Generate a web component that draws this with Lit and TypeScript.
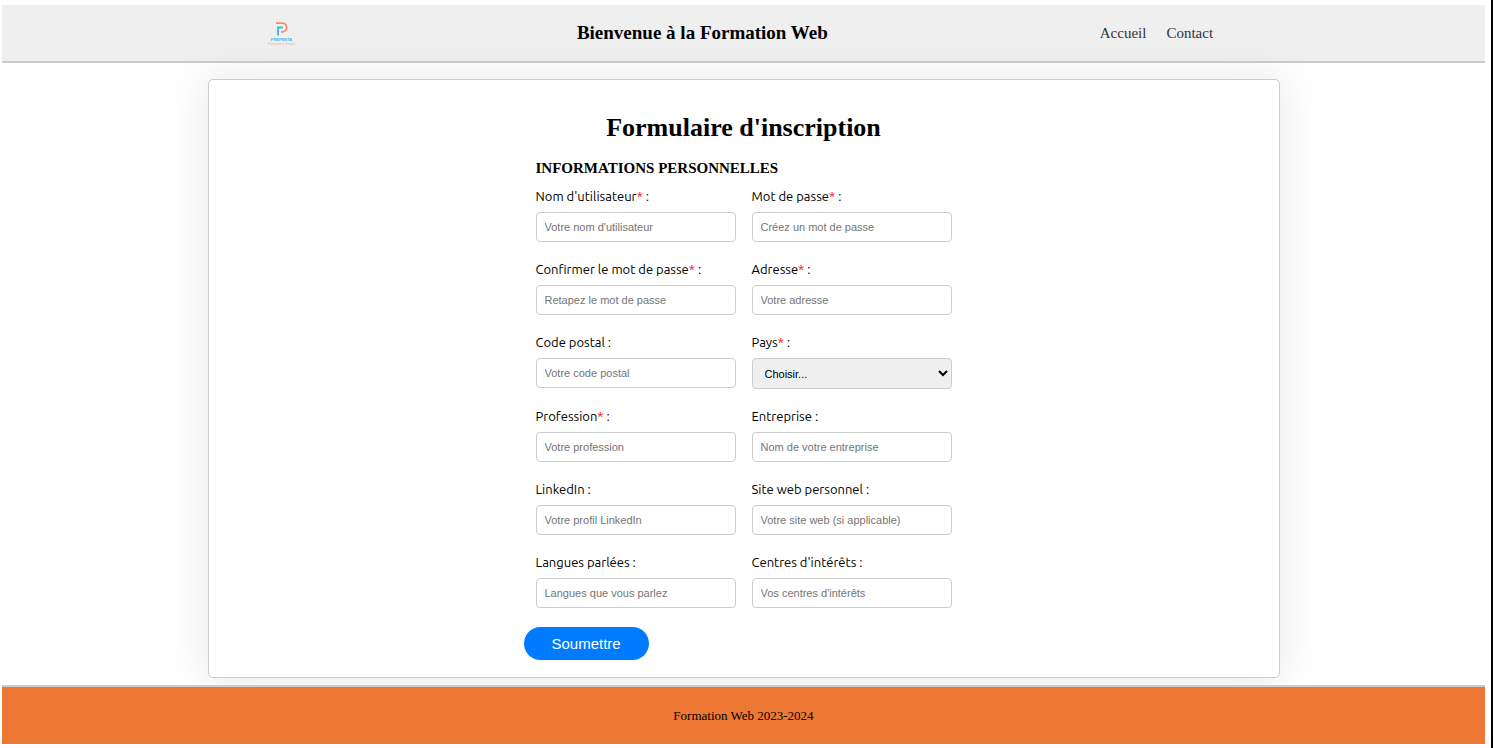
import { LitElement, html, css, nothing } from "lit";
import { customElement } from "lit/decorators.js";

interface Field {
  id: string;
  label: string;
  hint: string;
  required?: boolean;
  type?: string;
}

const FIELDS: Field[] = [
  { id: "username", label: "Nom d'utilisateur", hint: "Votre nom d'utilisateur", required: true },
  { id: "password", label: "Mot de passe", hint: "Créez un mot de passe", required: true, type: "password" },
  { id: "confirm", label: "Confirmer le mot de passe", hint: "Retapez le mot de passe", required: true, type: "password" },
  { id: "address", label: "Adresse", hint: "Votre adresse", required: true },
  { id: "postcode", label: "Code postal", hint: "Votre code postal" },
  { id: "country", label: "Pays", hint: "Choisir...", required: true, type: "select" },
  { id: "job", label: "Profession", hint: "Votre profession", required: true },
  { id: "company", label: "Entreprise", hint: "Nom de votre entreprise" },
  { id: "linkedin", label: "LinkedIn", hint: "Votre profil LinkedIn" },
  { id: "website", label: "Site web personnel", hint: "Votre site web (si applicable)" },
  { id: "languages", label: "Langues parlées", hint: "Langues que vous parlez" },
  { id: "interests", label: "Centres d'intérêts", hint: "Vos centres d'intérêts" },
];

@customElement("app-root")
export class AppRoot extends LitElement {
  static styles = css`
    :host {
      display: block;
      box-sizing: border-box;
      min-height: 100vh;
      padding: 5px 6px 4px 2px;
      border-right: 2px solid #000;
      background: #fff;
      color: #000;
      font-family: "Liberation Serif", serif;
    }
    .header {
      display: flex;
      justify-content: space-evenly;
      align-items: center;
      box-sizing: border-box;
      height: 58px;
      background: #efefef;
      border-bottom: 2px solid #ccc;
    }
    .logo {
      display: block;
      width: 35px;
      height: 28px;
      margin-right: 16px;
    }
    .logo-name {
      font: bold 4px "Liberation Sans", sans-serif;
      fill: #45b8f2;
    }
    .logo-tag {
      font: 3px "Liberation Sans", sans-serif;
      fill: #e9b8a6;
    }
    .site-title {
      margin: 0;
      font-size: 19px;
      line-height: 24px;
    }
    .nav {
      display: flex;
      gap: 20px;
      padding: 0 10px;
    }
    .nav-link {
      color: #333;
      font-size: 15px;
      line-height: 20px;
      text-decoration: none;
    }
    .card {
      box-sizing: border-box;
      max-width: 1072px;
      margin: 16px auto 7px;
      padding: 32px 16px 17px;
      border: 1px solid #ccc;
      border-radius: 5px;
      background: #fff;
      box-shadow: 0 0 45px rgba(0, 0, 0, 0.1);
    }
    .form {
      max-width: 416px;
      margin: 0 auto;
    }
    .form-title {
      margin: 0 0 14px;
      font-size: 26px;
      line-height: 32px;
      text-align: center;
    }
    .section-title {
      margin: 0 0 9px;
      font-size: 15px;
      line-height: 20px;
      text-transform: uppercase;
    }
    .grid {
      display: grid;
      grid-template-columns: 1fr 1fr;
      gap: 18px 16px;
      align-items: start;
    }
    .field {
      display: flex;
      flex-direction: column;
      gap: 7px;
    }
    .label {
      font-family: Ubuntu, "Noto Sans", sans-serif;
      font-size: 13px;
      line-height: 18px;
    }
    .star {
      color: red;
    }
    .control {
      box-sizing: border-box;
      width: 100%;
      height: 30px;
      margin: 0;
      padding: 0 8px;
      border: 1px solid #ccc;
      border-radius: 4px;
      background: #fff;
      font-family: "Liberation Sans", sans-serif;
      font-size: 11px;
    }
    .control::placeholder {
      color: #757575;
    }
    .select {
      height: 31px;
      background: #efefef;
      color: #000;
    }
    .submit {
      display: block;
      height: 33px;
      margin: 19px 0 0 -12px;
      padding: 0 28px;
      border: 0;
      border-radius: 17px;
      background: #007bff;
      color: #fff;
      font-family: "Liberation Sans", sans-serif;
      font-size: 15px;
    }
    .footer {
      display: flex;
      justify-content: center;
      align-items: center;
      box-sizing: border-box;
      height: 59px;
      border-top: 2px solid #ccc;
      background: #ed7833;
      font-size: 13px;
      line-height: 16px;
    }
  `;

  private control(f: Field) {
    if (f.type === "select") {
      return html`<select class="control select" id=${f.id}><option>${f.hint}</option></select>`;
    }
    return html`<input class="control" id=${f.id} type=${f.type ?? "text"} placeholder=${f.hint} />`;
  }

  render() {
    return html`
      <header class="header">
        <svg class="logo" viewBox="0 0 35 28" role="img" aria-label="Prepenta">
          <path d="M12 4.2H18.2A4.3 4.3 0 0 1 18.4 12.8H17.2" fill="none" stroke="#f98562" stroke-width="1.8" />
          <path d="M14 16.5V8.4H19" fill="none" stroke="#45b8f2" stroke-width="2" />
          <text class="logo-name" x="17.5" y="21.8" text-anchor="middle">PREPENTA</text>
          <text class="logo-tag" x="17.5" y="26" text-anchor="middle">Formation et Emploi</text>
        </svg>
        <h1 class="site-title">Bienvenue à la Formation Web</h1>
        <nav class="nav">
          <a class="nav-link" href="#accueil">Accueil</a>
          <a class="nav-link" href="#contact">Contact</a>
        </nav>
      </header>
      <main class="card">
        <form class="form" @submit=${(e: Event) => e.preventDefault()}>
          <h2 class="form-title">Formulaire d'inscription</h2>
          <h3 class="section-title">Informations personnelles</h3>
          <div class="grid">
            ${FIELDS.map(
              (f) => html`<div class="field">
                <label class="label" for=${f.id}>${f.label}${f.required ? html`<span class="star">*</span>` : nothing} :</label>
                ${this.control(f)}
              </div>`
            )}
          </div>
          <button class="submit" type="submit">Soumettre</button>
        </form>
      </main>
      <footer class="footer">Formation Web 2023-2024</footer>
    `;
  }
}
